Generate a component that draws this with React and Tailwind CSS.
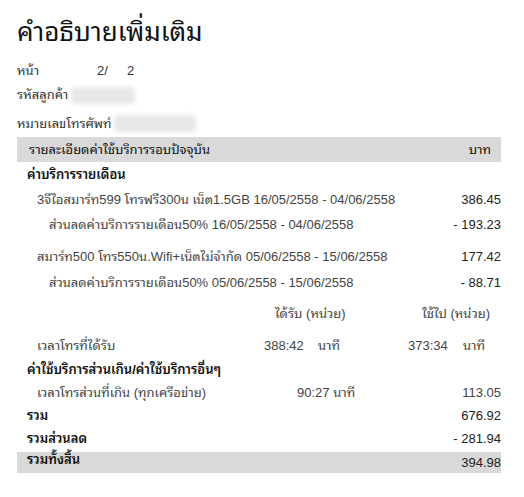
const Line = ({ h, indent = 'pl-0', label, amount, bold = false, className = '' }) => (
  <div
    className={`flex items-center justify-between ${h} ${indent} ${className} ${
      bold ? 'font-semibold text-[#111]' : 'text-[#444]'
    }`}
  >
    <span>{label}</span>
    {amount && <span className="font-normal text-[#222]">{amount}</span>}
  </div>
)

const Blur = ({ w }) => <span className={`inline-block h-[17px] ${w} rounded-sm bg-[#e8e8e8] blur-[2px]`} />

export default function App() {
  return (
    <div className="h-[497px] w-[524px] bg-white font-['Liberation_Sans','Noto_Sans_Thai_Looped',sans-serif] text-[13px]">
      <div className="w-[501px] pl-[17px] pt-[12px]">
        <h1 className="h-[40px] text-[26px] leading-[40px] text-[#111]">คำอธิบายเพิ่มเติม</h1>

        <div className="mt-[7px] flex h-[24px] items-center text-[#333]">
          <span className="w-[80px]">หน้า</span>
          <span className="w-[30px]">2/</span>
          <span>2</span>
        </div>
        <div className="flex h-[24px] items-center gap-[3px] text-[#333]">
          <span>รหัสลูกค้า</span>
          <Blur w="w-[64px]" />
        </div>
        <div className="mt-[3px] flex h-[27px] items-center gap-[3px] text-[#333]">
          <span>หมายเลขโทรศัพท์</span>
          <Blur w="w-[82px]" />
        </div>

        <div className="flex h-[25px] items-center justify-between bg-[#d9d9d9] pl-[12px] pr-[10px] text-[#111]">
          <span>รายละเอียดค่าใช้บริการรอบปัจจุบัน</span>
          <span>บาท</span>
        </div>

        <Line h="h-[26px]" indent="pl-[10px]" label="ค่าบริการรายเดือน" bold />
        <Line h="h-[24px]" indent="pl-[20px]" label="3จีไอสมาร์ท599 โทรฟรี300น เน็ต1.5GB 16/05/2558 - 04/06/2558" amount="386.45" />
        <Line h="h-[26px]" indent="pl-[32px]" label="ส่วนลดค่าบริการรายเดือน50% 16/05/2558 - 04/06/2558" amount="- 193.23" />
        <Line h="h-[32px]" indent="pl-[20px]" label="สมาร์ท500 โทร550น.Wifi+เน็ตไม่จำกัด 05/06/2558 - 15/06/2558" amount="177.42" className="pt-[6px]" />
        <Line h="h-[26px]" indent="pl-[32px]" label="ส่วนลดค่าบริการรายเดือน50% 05/06/2558 - 15/06/2558" amount="- 88.71" />

        <div className="flex h-[30px] items-center pt-[6px] text-[#444]">
          <span className="ml-[258px] w-[147px]">ได้รับ (หน่วย)</span>
          <span>ใช้ไป (หน่วย)</span>
        </div>
        <div className="flex h-[34px] items-center pl-[20px] pt-[6px] text-[#444]">
          <span className="w-[227px]">เวลาโทรที่ได้รับ</span>
          <span className="w-[54px]">388:42</span>
          <span className="w-[90px]">นาที</span>
          <span className="w-[55px]">373:34</span>
          <span>นาที</span>
        </div>

        <Line h="h-[20px]" indent="pl-[10px]" label="ค่าใช้บริการส่วนเกิน/ค่าใช้บริการอื่นๆ" bold />
        <div className="flex h-[26px] items-center justify-between pl-[20px] text-[#444]">
          <span className="w-[260px]">เวลาโทรส่วนที่เกิน (ทุกเครือข่าย)</span>
          <span className="mr-auto">90:27 นาที</span>
          <span>113.05</span>
        </div>
        <Line h="h-[20px]" indent="pl-[10px]" label="รวม" amount="676.92" bold />
        <Line h="h-[26px]" indent="pl-[10px]" label="รวมส่วนลด" amount="- 281.94" bold />
        <div className="flex h-[21px] items-center justify-between bg-[#d9d9d9] pl-[10px] font-semibold text-[#111]">
          <span className="-mt-[6px]">รวมทั้งสิ้น</span>
          <span className="font-normal text-[#222]">394.98</span>
        </div>
      </div>
    </div>
  )
}
